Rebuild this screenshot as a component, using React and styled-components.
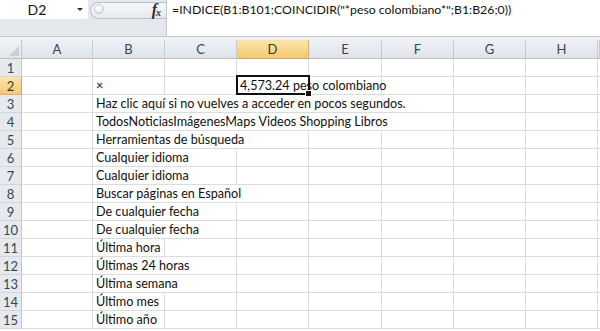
import React from "react";
import styled, { createGlobalStyle } from "styled-components";

const GlobalStyle = createGlobalStyle`
  html, body {
    margin: 0;
    padding: 0;
    background: #fff;
  }
  body {
    font-family: Lato, "Liberation Sans", sans-serif;
    overflow: hidden;
  }
`;

const COLS = "22px 71px 72px 72px 72px 73px 72px 72px 72px 1fr";
const LETTERS = ["A", "B", "C", "D", "E", "F", "G", "H", ""];

// text in column B and how many columns it runs over
const rows = [
  { n: 1 },
  { n: 2 },
  { n: 3, text: "Haz clic aquí si no vuelves a acceder en pocos segundos.", span: 5 },
  { n: 4, text: "TodosNoticiasImágenesMaps Videos Shopping Libros", span: 5 },
  { n: 5, text: "Herramientas de búsqueda", span: 3 },
  { n: 6, text: "Cualquier idioma", span: 2 },
  { n: 7, text: "Cualquier idioma", span: 2 },
  { n: 8, text: "Buscar páginas en Español", span: 3 },
  { n: 9, text: "De cualquier fecha", span: 2 },
  { n: 10, text: "De cualquier fecha", span: 2 },
  { n: 11, text: "Última hora", span: 1 },
  { n: 12, text: "Últimas 24 horas", span: 2 },
  { n: 13, text: "Última semana", span: 2 },
  { n: 14, text: "Último mes", span: 1 },
  { n: 15, text: "Último año", span: 1 },
];

const App = () => {
  return (
    <Sheet>
      <GlobalStyle />
      <FormulaBar>
        <NameBox>
          <span>D2</span>
          <Arrow />
        </NameBox>
        <FxPill>
          <Knob />
          <Fx>
            <i>f</i>
            <sub>x</sub>
          </Fx>
        </FxPill>
        <FormulaInput>
          =INDICE(B1:B101;COINCIDIR("*peso colombiano*";B1:B26;0))
        </FormulaInput>
      </FormulaBar>
      <Band />
      <HeaderRow>
        <Corner>
          <Triangle />
        </Corner>
        {LETTERS.map((l, i) => (
          <ColHead key={i} $active={l === "D"}>
            {l}
          </ColHead>
        ))}
      </HeaderRow>
      {rows.map((r) => {
        const used = r.n === 2 ? 8 : 1 + (r.span || 1);
        const rest = Array.from({ length: 9 - used });
        return (
          <Row key={r.n}>
            <RowHead $active={r.n === 2}>{r.n}</RowHead>
            <Cell />
            {r.n === 2 ? (
              <>
                <Cell>×</Cell>
                <Cell />
                <Cell $span={2}>
                  4,573.24 peso colombiano
                  <Selection>
                    <Handle />
                  </Selection>
                </Cell>
                <Cell />
                <Cell />
                <Cell />
              </>
            ) : (
              <Cell $span={r.span || 1}>{r.text}</Cell>
            )}
            {rest.map((_, i) => (
              <Cell key={i} />
            ))}
          </Row>
        );
      })}
    </Sheet>
  );
};

export default App;

const Sheet = styled.div`
  width: 600px;
  height: 331px;
  overflow: hidden;
  display: flex;
  flex-direction: column;
  background: #fff;
`;

const FormulaBar = styled.div`
  display: flex;
  align-items: flex-start;
  height: 36px;
  background: #e4e7eb;
  border-bottom: 1px solid #c3c8ce;
  flex-shrink: 0;
`;

const NameBox = styled.div`
  position: relative;
  width: 88px;
  height: 19px;
  background: #fff;
  display: flex;
  align-items: center;
  font-size: 14px;
  color: #111;

  span {
    width: 74px;
    text-align: center;
  }
`;

const Arrow = styled.div`
  width: 0;
  height: 0;
  border-left: 3px solid transparent;
  border-right: 3px solid transparent;
  border-top: 3px solid #333;
  margin-left: 3px;
`;

const FxPill = styled.div`
  margin-top: 2px;
  margin-left: 2px;
  width: 76px;
  height: 17px;
  box-sizing: border-box;
  border: 1px solid #bac0c7;
  border-right: none;
  border-radius: 9px 0 0 9px;
  background: linear-gradient(#f7f8f9, #e6e9ec);
  display: flex;
  align-items: center;
  justify-content: space-between;
  padding: 0 5px 0 3px;
`;

const Knob = styled.div`
  width: 8px;
  height: 8px;
  border-radius: 50%;
  border: 1px solid #c3c8ce;
  background: radial-gradient(circle at 40% 35%, #fff, #dde1e5);
  margin-top: -4px;
`;

const Fx = styled.div`
  font-family: "Liberation Serif", serif;
  font-weight: bold;
  font-size: 16px;
  color: #2e2e2e;
  line-height: 1;
  margin-top: -2px;

  sub {
    font-size: 10px;
    font-style: italic;
    vertical-align: -1px;
    margin-left: -1px;
  }
`;

const FormulaInput = styled.div`
  flex: 1;
  height: 36px;
  box-sizing: border-box;
  background: #fff;
  border-left: 1px solid #c3c8ce;
  padding: 2px 0 0 5px;
  font-size: 12.3px;
  line-height: 16px;
  color: #111;
  white-space: nowrap;
`;

const Band = styled.div`
  height: 3px;
  background: #eff1f3;
  flex-shrink: 0;
`;

const HeaderRow = styled.div`
  display: grid;
  grid-template-columns: ${COLS};
  height: 19px;
  flex-shrink: 0;
`;

const Corner = styled.div`
  position: relative;
  box-sizing: border-box;
  border-right: 1px solid #c3c9d0;
  border-bottom: 1px solid #b8bfc7;
  background: linear-gradient(#f1f3f5, #e2e6ea);
`;

const Triangle = styled.div`
  position: absolute;
  right: 2px;
  bottom: 2px;
  width: 0;
  height: 0;
  border-left: 10px solid transparent;
  border-bottom: 10px solid #c9ced4;
`;

const ColHead = styled.div`
  box-sizing: border-box;
  display: flex;
  align-items: center;
  justify-content: center;
  font-size: 13px;
  color: ${(p) => (p.$active ? "#3a3a2a" : "#3b4654")};
  background: ${(p) =>
    p.$active
      ? "linear-gradient(#fbe5ad, #f4ca72)"
      : "linear-gradient(#eef1f4, #dfe3e8)"};
  border-right: 1px solid ${(p) => (p.$active ? "#e2b35c" : "#c6ccd3")};
  border-bottom: 1px solid ${(p) => (p.$active ? "#e0a53e" : "#b8bfc7")};
`;

const Row = styled.div`
  display: grid;
  grid-template-columns: ${COLS};
  height: 18px;
  flex-shrink: 0;
`;

const RowHead = styled.div`
  box-sizing: border-box;
  display: flex;
  align-items: center;
  justify-content: center;
  font-size: 13px;
  color: ${(p) => (p.$active ? "#3a3a2a" : "#3b4654")};
  background: ${(p) =>
    p.$active ? "linear-gradient(#fbe5ad, #f4ca72)" : "#e6eaee"};
  border-right: 1px solid ${(p) => (p.$active ? "#e0a53e" : "#c0c6cd")};
  border-bottom: 1px solid ${(p) => (p.$active ? "#e2b35c" : "#d2d7dc")};
`;

const Cell = styled.div`
  position: relative;
  grid-column: span ${(p) => p.$span || 1};
  box-sizing: border-box;
  border-right: 1px solid #dadcdf;
  border-bottom: 1px solid #dadcdf;
  display: flex;
  align-items: flex-end;
  padding: 0 0 0 3px;
  font-size: 12.6px;
  line-height: 16px;
  color: #111;
  white-space: nowrap;
`;

const Selection = styled.div`
  position: absolute;
  left: -1px;
  top: -2px;
  width: 74px;
  height: 20px;
  box-sizing: border-box;
  border: 2px solid #111;
  pointer-events: none;
`;

const Handle = styled.div`
  position: absolute;
  right: -4px;
  bottom: -4px;
  width: 5px;
  height: 5px;
  background: #111;
  border: 1px solid #fff;
`;
